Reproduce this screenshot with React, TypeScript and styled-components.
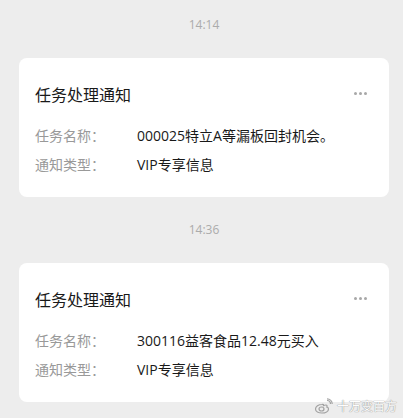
import React from "react";
import styled, { createGlobalStyle } from "styled-components";

const Global = createGlobalStyle`
  html, body { margin: 0; padding: 0; background: #ededed; }
  body { font-family: "Open Sans", "Noto Sans CJK SC", sans-serif; }
`;

const Page = styled.div`
  position: relative;
  width: 403px;
  height: 418px;
  overflow: hidden;
  background: #ededed;
  padding: 16px 14px 0 19px;
  box-sizing: border-box;
  display: flex;
  flex-direction: column;
`;

const Time = styled.div`
  height: 18px;
  line-height: 18px;
  font-size: 12px;
  color: #ababab;
  text-align: center;
  margin: 0 0 24px 0;
`;

const Card = styled.div`
  background: #ffffff;
  border-radius: 8px;
  padding: 24px 22px 18px 16px;
  margin-bottom: 24px;
  display: flex;
  flex-direction: column;
`;

const Head = styled.div`
  display: flex;
  align-items: center;
  justify-content: space-between;
  height: 26px;
  margin-bottom: 13px;
`;

const Title = styled.div`
  font-size: 16px;
  color: #191919;
  line-height: 26px;
`;

const Dots = styled.div`
  display: flex;
  gap: 2px;
  margin-top: -4px;
  span {
    width: 3px;
    height: 3px;
    border-radius: 50%;
    background: #a8a8a8;
  }
`;

const Row = styled.div`
  display: grid;
  grid-template-columns: 102px 1fr;
  height: 29px;
  line-height: 29px;
  font-size: 14px;
`;

const Label = styled.span`
  color: #999999;
  font-family: "Noto Sans CJK SC", sans-serif;
`;

const Value = styled.span`
  color: #191919;
  white-space: nowrap;
`;

const Watermark = styled.div`
  position: absolute;
  right: 6px;
  bottom: 3px;
  display: flex;
  align-items: center;
  gap: 3px;
  font-size: 12px;
  color: #ffffff;
  text-shadow: 0 0 1px #8a8a8a, 0 0 1px #8a8a8a;
  opacity: 0.9;
`;

type Item = { time: string; name: string; type: string };

const items: Item[] = [
  { time: "14:14", name: "000025特立A等漏板回封机会。", type: "VIP专享信息" },
  { time: "14:36", name: "300116益客食品12.48元买入", type: "VIP专享信息" },
];

const WeiboLogo = () => (
  <svg width="20" height="16" viewBox="0 0 20 16" fill="none" stroke="#9a9a9a" strokeWidth="1.2">
    <path d="M8 6.5c-3.5 0-6.5 2-6.5 4.5S4.5 15 8 15s6.5-1.6 6.5-4c0-1.5-1.2-1.9-1.7-2 .6-1 .4-2-1-2-1 0-1.8.4-2.3.6.2-.9-.2-1.6-1.5-1.1z" />
    <ellipse cx="7.5" cy="11" rx="2.5" ry="2" />
    <path d="M13 2.5c2 0 3.5 1.5 3.5 3.5" />
    <path d="M13 0.8c3 0 5.2 2.3 5.2 5.2" />
  </svg>
);

export default function App() {
  return (
    <>
      <Global />
      <Page>
        {items.map((it) => (
          <React.Fragment key={it.time}>
            <Time>{it.time}</Time>
            <Card>
              <Head>
                <Title>任务处理通知</Title>
                <Dots>
                  <span />
                  <span />
                  <span />
                </Dots>
              </Head>
              <Row>
                <Label>任务名称：</Label>
                <Value>{it.name}</Value>
              </Row>
              <Row>
                <Label>通知类型：</Label>
                <Value>{it.type}</Value>
              </Row>
            </Card>
          </React.Fragment>
        ))}
        <Watermark>
          <WeiboLogo />
          <span>十万变百方</span>
        </Watermark>
      </Page>
    </>
  );
}
